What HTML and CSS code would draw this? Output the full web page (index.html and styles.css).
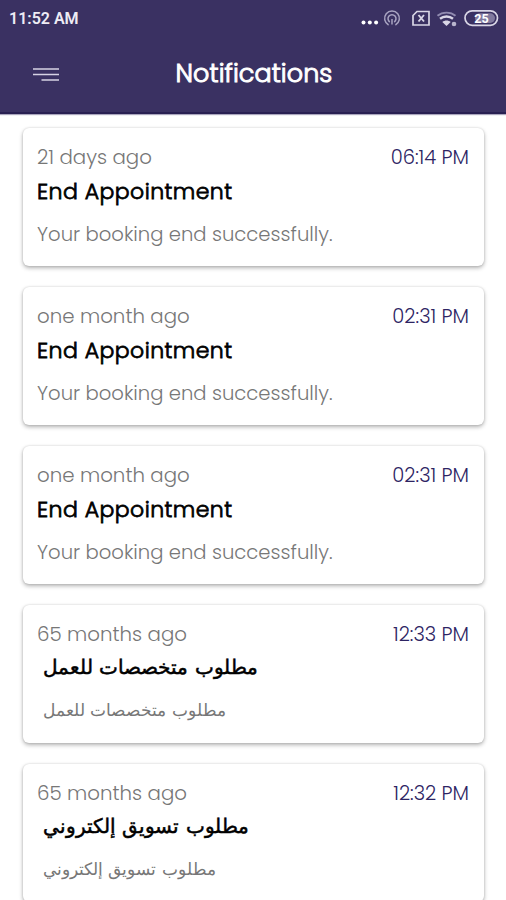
FILE: index.html
```html
<!DOCTYPE html>
<html lang="en">

<head>
    <meta charset="utf-8">
    <meta name="viewport" content="width=device-width, initial-scale=1">
    <title>Notifications</title>
    <link rel="stylesheet" href="styles.css">
</head>

<body>
    <header class="header">
        <div class="status-bar">
            <span class="clock">11:52 AM</span>
            <svg class="status-icons" width="140" height="20" viewBox="0 0 140 20" fill="none" stroke="#d9d6e6">
                <!-- more -->
                <g fill="#fff" stroke="none">
                    <circle cx="3.5" cy="13.5" r="2"/>
                    <circle cx="9.8" cy="13.5" r="2"/>
                    <circle cx="16.1" cy="13.5" r="2"/>
                </g>
                <!-- hotspot -->
                <g stroke="#a9a4c2" stroke-width="1.5">
                    <path d="M28.6 16a7.4 7.4 0 1 1 6.800 0"/>
                    <path d="M29.8 13a4 4 0 1 1 4.400 0"/>
                    <path d="M32 10v5.5"/>
                </g>
                <!-- no sim -->
                <path stroke-width="1.7" d="M57 2.500h12v13.500h-16v-9.500z"/>
                <path stroke-width="1.9" d="M58.500 6l5.500 6.500M64 6l-5.500 6.500"/>
                <!-- wifi -->
                <path stroke="#918bb0" stroke-width="1.9" d="M77.500 6.800c5-4.200 13-4.200 18 0"/>
                <path stroke-width="2.4" d="M80 9.800c3.700-3 9.300-3 13 0"/>
                <path fill="#d9d6e6" stroke="none" d="M82.300 13c2.500-2 6-2 8.400 0l-4.200 4z"/>
                <circle cx="94" cy="15" r="2.300" fill="#b9b5cd" stroke="none"/>
                <!-- battery -->
                <rect x="105" y="1.800" width="32.500" height="14.500" rx="7.200" stroke-width="1.700"/>
                <rect x="115" y="4.200" width="20" height="9.800" rx="4.900" fill="#817a9f" stroke="none"/>
                <text class="battery-level" x="121.500" y="13.500" text-anchor="middle">25</text>
            </svg>
        </div>
        <div class="title-bar">
            <svg class="menu" width="26" height="16" viewBox="0 0 26 16" stroke="#d6d2e4" stroke-width="1.7">
                <path d="M0 2h26M0 7.5h26M8.5 13h17.5"/>
            </svg>
            <h1 class="title">Notifications</h1>
        </div>
    </header>

    <main class="list">
        <article class="card">
            <div class="meta">
                <span class="age">21 days ago</span>
                <time class="time">06:14 PM</time>
            </div>
            <h2 class="subject">End Appointment</h2>
            <p class="message">Your booking end successfully.</p>
        </article>
        <article class="card">
            <div class="meta">
                <span class="age">one month ago</span>
                <time class="time">02:31 PM</time>
            </div>
            <h2 class="subject">End Appointment</h2>
            <p class="message">Your booking end successfully.</p>
        </article>
        <article class="card">
            <div class="meta">
                <span class="age">one month ago</span>
                <time class="time">02:31 PM</time>
            </div>
            <h2 class="subject">End Appointment</h2>
            <p class="message">Your booking end successfully.</p>
        </article>
        <article class="card">
            <div class="meta">
                <span class="age">65 months ago</span>
                <time class="time">12:33 PM</time>
            </div>
            <h2 class="subject arabic" lang="ar">مطلوب متخصصات للعمل</h2>
            <p class="message arabic" lang="ar">مطلوب متخصصات للعمل</p>
        </article>
        <article class="card">
            <div class="meta">
                <span class="age">65 months ago</span>
                <time class="time">12:32 PM</time>
            </div>
            <h2 class="subject arabic" lang="ar">مطلوب تسويق إلكتروني</h2>
            <p class="message arabic" lang="ar">مطلوب تسويق إلكتروني</p>
        </article>
    </main>
</body>

</html>
```
FILE: styles.css
```css
* {
    box-sizing: border-box;
    margin: 0;
    padding: 0;
}

html {
    height: 100%;
    overflow: hidden;
}

body {
    height: 100%;
    overflow: hidden;
    background: #fff;
    font-family: Poppins, Inter, "DejaVu Sans", sans-serif;
    font-weight: 300;
}

.header {
    height: 114px;
    background: #3a3162;
    border-bottom: 2px solid #292052;
    box-shadow: 0 1px 1px #aaa6bd;
    color: #fff;
}

.status-bar {
    display: flex;
    justify-content: space-between;
    align-items: center;
    height: 38px;
    padding: 0 6px 0 9px;
}

.clock {
    font: 600 16px/20px Roboto, sans-serif;
    color: #eeecf5;
}

.status-icons {
    overflow: visible;
}

.battery-level {
    font: 700 12.5px Roboto, sans-serif;
    fill: #fff;
    stroke: none;
}

.title-bar {
    display: grid;
    grid-template-columns: 60px 1fr 60px;
    align-items: center;
    height: 70px;
}

.menu {
    margin: 4px 0 0 33px;
}

.title {
    padding-left: 2px;
    font-size: 25.4px;
    font-weight: 300;
    letter-spacing: 0.1px;
    line-height: 32px;
    text-align: center;
    -webkit-text-stroke: 1px #fff;
}

.list {
    display: flex;
    flex-direction: column;
    gap: 21px;
    padding: 14px 22px 0 23px;
}

.card {
    flex: none;
    height: 138px;
    padding: 16px 15px 0 14px;
    border-radius: 6px;
    background: #fff;
    box-shadow: 0 2px 4px rgba(0, 0, 0, 0.3), 0 0 2px rgba(0, 0, 0, 0.15);
}

.meta {
    display: flex;
    justify-content: space-between;
    font-size: 19.8px;
    line-height: 26px;
}

.age {
    color: #777;
}

.time {
    color: #2d2463;
    font-size: 19.5px;
    line-height: 27px;
}

.subject {
    height: 35px;
    color: #000;
    font-size: 22px;
    font-weight: 300;
    letter-spacing: 0.45px;
    line-height: 42px;
    -webkit-text-stroke: 0.8px #000;
}

.message {
    margin-top: 15px;
    color: #777;
    font-size: 19.6px;
    line-height: 26px;
}

.arabic {
    padding-left: 6px;
    font-family: "DejaVu Sans", sans-serif;
    letter-spacing: 0;
}

.subject.arabic {
    font-size: 20.3px;
    line-height: 39px;
    -webkit-text-stroke-width: 0.5px;
}

.message.arabic {
    margin-top: 15px;
    font-size: 17.1px;
    line-height: 24px;
}
```
